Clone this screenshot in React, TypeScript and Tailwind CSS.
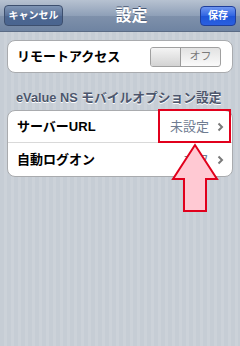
import React from "react";

const font = { fontFamily: '"Liberation Sans", "Noto Sans CJK JP", sans-serif' };

function Chevron() {
  return (
    <svg width="7" height="10" viewBox="0 0 7 10" className="shrink-0">
      <polyline points="1.5,1.5 5,5 1.5,8.5" fill="none" stroke="#7a7a7a" strokeWidth="2" />
    </svg>
  );
}

export default function App() {
  return (
    <div
      className="relative w-[240px] h-[346px] overflow-hidden bg-[repeating-linear-gradient(90deg,#c6cdd5_0px,#c6cdd5_4px,#ccd2d9_4px,#ccd2d9_7px)]"
      style={font}
    >
      {/* nav bar */}
      <div className="h-[32px] flex items-center justify-between px-[4px] bg-[linear-gradient(#b7c2d1,#8fa0b8_50%,#7f91ab_51%,#6f84a2)] border-b border-[#5a6b85]">
        <div className="h-[21px] w-[59px] rounded-[4px] border border-[#3d4f6e] bg-[linear-gradient(#7f95b5,#5a7299_50%,#4c6690_51%,#4a6590)] flex items-center justify-center text-white text-[10px] font-bold">
          キャンセル
        </div>
        <div className="text-white text-[16px] font-bold [text-shadow:0_-1px_0_#4a5a75]">設定</div>
        <div className="h-[20px] w-[36px] rounded-[4px] border border-[#1f3f9c] bg-[linear-gradient(#6f96f0,#2f64e2_50%,#1e55d8_51%,#2a5fe0)] flex items-center justify-center text-white text-[10px] font-bold">
          保存
        </div>
      </div>

      {/* group 1 */}
      <div className="mx-[7px] mt-[8px] h-[33px] bg-white rounded-[8px] border border-[#a9abae] flex items-center justify-between pl-[9px] pr-[11px]">
        <span className="text-[13px] font-bold text-black">リモートアクセス</span>
        <div className="w-[71px] h-[20px] rounded-[3px] border border-[#a0a0a0] flex overflow-hidden bg-[linear-gradient(#e2e2e2,#fafafa)]">
          <div className="w-[30px] h-full border-r border-[#9a9a9a] bg-[linear-gradient(#f4f4f4,#d3d3d3)]" />
          <div className="flex-1 flex items-center justify-center text-[11px] text-[#7a7a7a]">オフ</div>
        </div>
      </div>

      {/* header */}
      <div className="mt-[15px] px-[16px] h-[20px] flex items-center text-[12.75px] font-bold text-[#4c566c] [text-shadow:0_1px_0_#ffffff]">
        eValue NS モバイルオプション設定
      </div>

      {/* group 2 */}
      <div className="mx-[7px] mt-[2px] bg-white rounded-[8px] border border-[#a9abae] overflow-hidden">
        <div className="h-[32px] flex items-center justify-between pl-[9px] pr-[8px] border-b border-[#d9d9d9]">
          <span className="text-[13px] font-bold text-black">サーバーURL</span>
          <div className="flex items-center gap-[8px]">
            <span className="text-[13px] text-[#6f7c91]">未設定</span>
            <Chevron />
          </div>
        </div>
        <div className="h-[33px] flex items-center justify-between pl-[9px] pr-[8px]">
          <span className="text-[13px] font-bold text-black">自動ログオン</span>
          <div className="flex items-center gap-[8px]">
            <span className="text-[13px] text-[#6f7c91]">オフ</span>
            <Chevron />
          </div>
        </div>
      </div>

      {/* red highlight box */}
      <div className="absolute left-[158px] top-[109px] w-[73px] h-[34px] border-2 border-[#e1001c]" />

      {/* arrow */}
      <svg className="absolute left-[170px] top-[142px]" width="50" height="72" viewBox="0 0 50 72">
        <polygon
          points="25,3 3,37 14,37 14,69 36,69 36,37 47,37"
          fill="#ffc9d3"
          stroke="#e1001c"
          strokeWidth="2"
          strokeLinejoin="miter"
        />
      </svg>
    </div>
  );
}
